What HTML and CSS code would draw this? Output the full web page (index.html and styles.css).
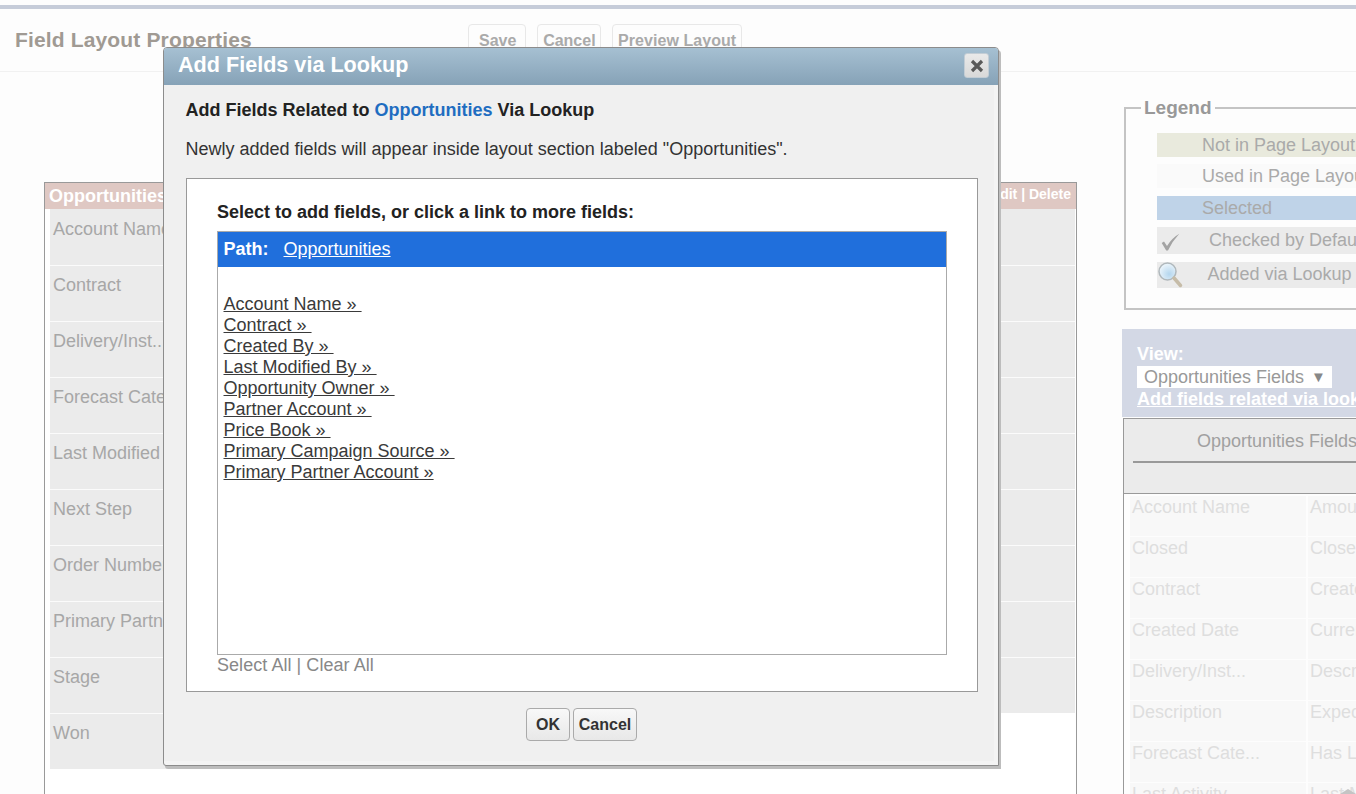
FILE: index.html
```html
<!DOCTYPE html>
<html lang="en">
<head>
<meta charset="utf-8">
<title>Field Layout Properties</title>
<link rel="stylesheet" href="styles.css">
</head>
<body>
<div class="page">
  <div class="topbar"></div>
  <header class="head">
    <h1 class="head-title">Field Layout Properties</h1>
    <div class="head-actions">
      <span class="ghost-btn ghost-save">Save</span>
      <span class="ghost-btn">Cancel</span>
      <span class="ghost-btn ghost-preview">Preview Layout</span>
    </div>
  </header>
  <main class="main">
    <section class="section">
      <div class="section-head"><span>Opportunities</span><span class="section-tools">Edit | Delete</span></div>
      <div class="section-rows">
        <div class="col">
          <div class="row">Account Name</div>
          <div class="row">Contract</div>
          <div class="row">Delivery/Inst...</div>
          <div class="row">Forecast Cate...</div>
          <div class="row">Last Modified</div>
          <div class="row">Next Step</div>
          <div class="row">Order Number</div>
          <div class="row">Primary Partner</div>
          <div class="row">Stage</div>
          <div class="row">Won</div>
        </div>
        <div class="col">
          <div class="row"></div>
          <div class="row"></div>
          <div class="row"></div>
          <div class="row"></div>
          <div class="row"></div>
          <div class="row"></div>
          <div class="row"></div>
          <div class="row"></div>
          <div class="row"></div>
        </div>
      </div>
    </section>
    <aside class="side">
      <fieldset class="legend">
        <legend class="legend-title">Legend</legend>
        <div class="lg lg-not">Not in Page Layout</div>
        <div class="lg lg-used">Used in Page Layout</div>
        <div class="lg lg-sel">Selected</div>
        <div class="lg lg-check">
          <svg class="lg-icon" width="24" height="24" viewBox="0 0 24 24"><path d="M4.700 14 L7 12.500 L10 17 Q15 9 22.300 4.800 Q15.500 12 11 21.500 L9.200 21.500 Z" fill="#a3a3a3"/></svg>
          <span class="lg-t1">Checked by Default</span>
        </div>
        <div class="lg lg-look">
          <svg class="lg-icon" width="26" height="26" viewBox="0 0 26 26"><defs><radialGradient id="glass" cx="0.6" cy="0.65" r="0.7"><stop offset="0" stop-color="#b4d6ee"/><stop offset="1" stop-color="#f2f8fc"/></radialGradient></defs><circle cx="10.500" cy="9.500" r="8.500" fill="url(#glass)" stroke="#b0b8bc" stroke-width="1.500"/><path d="M17 16 L23.500 23.500" stroke="#c6bca8" stroke-width="3.500" stroke-linecap="round"/></svg>
          <span class="lg-t2">Added via Lookup</span>
        </div>
      </fieldset>
      <div class="view">
        <div class="view-label">View:</div>
        <div class="view-select"><span>Opportunities Fields</span><span class="view-caret">▼</span></div>
        <div class="view-link">Add fields related via lookup</div>
      </div>
      <div class="palette">
        <div class="palette-head">
          <div class="palette-title">Opportunities Fields</div>
          <div class="palette-rule"></div>
        </div>
        <div class="palette-grid">
          <div class="pc">Account Name</div><div class="pc">Amount</div>
          <div class="pc">Closed</div><div class="pc">Close Date</div>
          <div class="pc">Contract</div><div class="pc">Created By</div>
          <div class="pc">Created Date</div><div class="pc">Currency</div>
          <div class="pc">Delivery/Inst...</div><div class="pc">Description</div>
          <div class="pc">Description</div><div class="pc">Expected</div>
          <div class="pc">Forecast Cate...</div><div class="pc">Has Line</div>
          <div class="pc">Last Activity</div><div class="pc">Last Modified</div>
        </div>
      </div>
    </aside>
  </main>
</div>

<div class="corner-mark"></div>

<div class="dialog">
  <div class="dialog-head">
    <h2 class="dialog-title">Add Fields via Lookup</h2>
    <div class="dialog-close"><svg width="14" height="14" viewBox="0 0 14 14"><path d="M2 2 L12 12 M12 2 L2 12" stroke="#595959" stroke-width="3.200"/></svg></div>
  </div>
  <div class="dialog-body">
    <p class="dialog-h">Add Fields Related to <span class="blue">Opportunities</span> Via Lookup</p>
    <p class="dialog-note">Newly added fields will appear inside layout section labeled "Opportunities".</p>
    <div class="picker">
      <p class="picker-h">Select to add fields, or click a link to more fields:</p>
      <div class="picker-box">
        <div class="path"><b class="path-label">Path:</b><a class="path-link" href="#">Opportunities</a></div>
        <ul class="links">
          <li><a href="#">Account Name » </a></li>
          <li><a href="#">Contract » </a></li>
          <li><a href="#">Created By » </a></li>
          <li><a href="#">Last Modified By » </a></li>
          <li><a href="#">Opportunity Owner » </a></li>
          <li><a href="#">Partner Account » </a></li>
          <li><a href="#">Price Book » </a></li>
          <li><a href="#">Primary Campaign Source » </a></li>
          <li><a href="#">Primary Partner Account »</a></li>
        </ul>
      </div>
      <div class="picker-foot">Select All | Clear All</div>
    </div>
    <div class="dialog-actions">
      <button class="btn btn-ok" type="button">OK</button>
      <button class="btn btn-cancel" type="button">Cancel</button>
    </div>
  </div>
</div>
</body>
</html>
```
FILE: styles.css
```css
* { box-sizing: border-box; }
html, body { margin: 0; padding: 0; height: 794px; overflow: hidden; }
body { background: #fdfdfd; font-family: "Liberation Sans", Arial, sans-serif; font-size: 18px; color: #999; position: relative; }
.page { width: 1356px; height: 794px; overflow: hidden; padding-top: 5px; }
.topbar { height: 4px; background: #c6ccd9; }
.head { height: 63px; border-bottom: 1px solid #f1f1f1; display: flex; padding-left: 15px; }
.head-title { margin: 18px 0 0; font-size: 21px; line-height: 26px; font-weight: 700; color: #a09a93; letter-spacing: 0.15px; width: 453px; flex: none; }
.head-actions { display: flex; gap: 11px; padding-top: 15px; }
.ghost-btn { height: 40px; padding: 7px 4.750px 0; border: 1px solid #e8e8e8; border-radius: 4px; font-size: 16px; font-weight: 700; color: #aaa; background: #fdfdfd; white-space: nowrap; }
.ghost-save { padding: 7px 9px 0 10px; }
.ghost-preview { letter-spacing: 0.05px; width: 130px; }
.main { display: flex; padding: 26px 0 0 44px; gap: 45px; height: 730px; align-items: flex-start; }
.section { flex: none; width: 1033px; margin-top: 84px; border: 1px solid #999; height: 660px; background: #fff; }
.section-head { height: 26px; background: #dfc8c3; color: #fff; font-weight: 700; display: flex; justify-content: space-between; padding: 1px 5px 0 4px; line-height: 24px; }
.section-tools { font-size: 14px; line-height: 21px; }
.section-rows { padding: 0 1px 0 5px; display: grid; grid-template-columns: 500px 1fr; }
.row { height: 56px; background: #ebebeb; border-top: 1px solid #fbfbfb; padding: 7px 3px; line-height: 24px; color: #a7a7a7; }
.row:first-child { border-top: 0; padding-top: 8px; }
.side { width: 234px; flex: none; }
.legend { margin: 0 0 0 2px; border: 2px solid #c4c4c4; border-right: 0; padding: 0 0 0 31px; height: 212px; width: 300px; display: flex; flex-direction: column; }
.legend-title { font-weight: 700; color: #999; padding: 0 3px; margin-left: -16px; font-size: 19px; line-height: 20px; }
.lg { flex: none; white-space: nowrap; padding-left: 45px; line-height: 24px; color: #aaa; height: 24px; margin-bottom: 7px; }
.lg-not { background: #e9eadd; margin-top: 15px; }
.lg-used { background: #fafafa; }
.lg-sel { background: #bfd3e8; margin-top: 1px; }
.lg-check, .lg-look { background: #ebebeb; padding: 0; display: flex; align-items: center; }
.lg-check { height: 27px; margin-bottom: 8px; }
.lg-look { height: 26px; }
.lg-icon { flex: none; }
.lg-t1 { margin: 0 0 2px 28px; }
.lg-t2 { margin: 0 0 2px 24.500px; }
.view { margin-top: 19px; height: 88px; width: 300px; background: #d3d8e5; padding: 14px 0 0 15px; color: #fff; font-weight: 700; line-height: 22px; white-space: nowrap; }
.view-label { height: 23px; }
.view-select { width: 195px; height: 22px; background: #fff; font-weight: 400; color: #999; padding-left: 7px; display: flex; align-items: center; }
.view-caret { font-size: 15px; margin-left: 7px; color: #888; }
.view-link { text-decoration: underline; line-height: 22px; }
.palette { margin: 1px 0 0 1px; height: 400px; border: 1px solid #999; border-right: 0; width: 300px; }
.palette-head { height: 75px; background: #ebebeb; border-bottom: 1px solid #999; padding: 10px 0 0 9px; }
.palette-title { margin-left: 64px; color: #a0a0a0; line-height: 24px; white-space: nowrap; }
.palette-rule { height: 2px; background: #999; margin-top: 8px; }
.palette-grid { display: grid; grid-template-columns: 178px 120px; padding: 2px 0 0 6px; grid-auto-rows: 41px; }
.pc { background: #f8f8f8; border-right: 2px solid #fdfdfd; border-bottom: 1px solid #fdfdfd; padding-left: 2px; line-height: 22px; color: #dedede; white-space: nowrap; overflow: hidden; }
.corner-mark { position: absolute; left: 1340px; top: 789px; width: 0; height: 0; border-left: 8px solid transparent; border-right: 8px solid transparent; border-bottom: 5px solid #c4c4c4; }
.dialog { position: absolute; left: 163px; top: 47px; width: 836px; height: 719px; background: #f0f0f0; border: 1px solid #8c8c8c; border-radius: 4px 4px 0 3px; box-shadow: 2px 3px 0 #bdbdbd, inset -4px -4px 0 #f4f4f4; color: #222; font-size: 18px; }
.dialog-head { height: 37px; background: linear-gradient(#a6c0d2, #86a2b7); display: flex; justify-content: space-between; padding: 0 9px 0 14px; border-radius: 3px 3px 0 0; }
.dialog-title { margin: 0; font-size: 21.600px; font-weight: 700; color: #fff; line-height: 34px; }
.dialog-close { margin-top: 5px; width: 25px; height: 25px; background: linear-gradient(#e9e9e9, #d9d9d9); border: 1px solid #c3cdd5; border-radius: 3px; display: flex; align-items: center; justify-content: center; }
.dialog-body { padding: 13px 20px 0 22px; }
.dialog-h { margin: 0 0 0 -0.500px; font-weight: 700; font-size: 18px; line-height: 24px; color: #222; }
.blue { color: #1f6dc1; }
.dialog-note { margin: 15px 0 17px -0.500px; font-size: 18px; line-height: 24px; color: #333; }
.picker { height: 514px; background: #fff; border: 1px solid #999; padding: 21px 30px 0 30px; }
.picker-h { margin: 0 0 7px; font-weight: 700; font-size: 18px; line-height: 24px; color: #222; }
.picker-box { height: 424px; border: 1px solid #aaa; background: #fff; }
.path { height: 35px; background: #206fdc; color: #fff; padding-left: 5.500px; display: flex; align-items: center; gap: 15px; }
.path-label { font-weight: 700; }
.path-link { color: #fff; text-decoration: underline; }
.links { list-style: none; margin: 27px 0 0; padding: 0 0 0 5.500px; }
.links li { height: 21px; line-height: 20px; }
.links a { color: #3a3a3a; text-decoration: underline; white-space: pre; }
.picker-foot { line-height: 20px; color: #888; margin-top: 0; letter-spacing: 0.05px; }
.dialog-actions { display: flex; justify-content: center; gap: 3px; padding-top: 16px; margin-right: 1px; }
.btn { height: 33px; padding: 0; font-family: inherit; font-size: 16px; font-weight: 700; color: #333; background: linear-gradient(#f8f8f8, #e8e8e8); border: 1px solid #aaa; border-radius: 4px; }
.btn-ok { width: 44px; }
.btn-cancel { width: 64px; }
```
